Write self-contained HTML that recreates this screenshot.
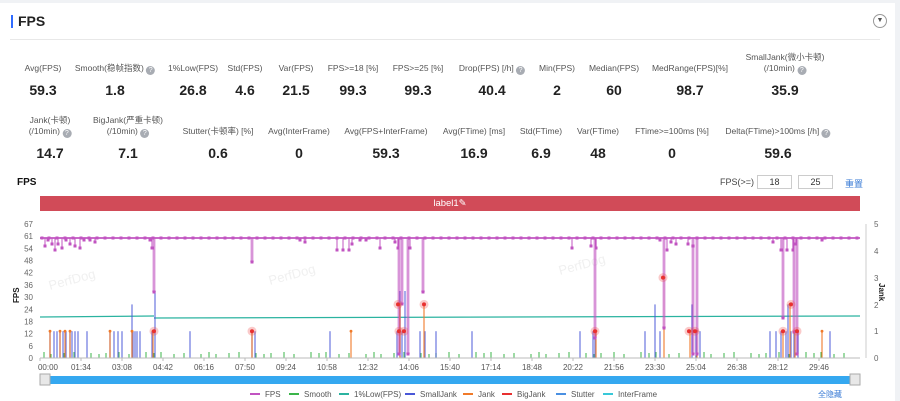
<!DOCTYPE html>
<html><head><meta charset="utf-8">
<style>
*{margin:0;padding:0;box-sizing:border-box}
body{width:900px;height:401px;background:#f0f2f5;font-family:"Liberation Sans","Noto Sans CJK SC",sans-serif;overflow:hidden;position:relative}
.card{position:absolute;left:0;top:3px;width:895px;height:398px;background:#fff}
.a{position:absolute;white-space:nowrap}
.l{font-size:8.5px;color:#555;text-align:center;transform:translateX(-50%);line-height:11px}
.v{font-size:14px;font-weight:bold;color:#222;transform:translateX(-50%)}
.q{display:inline-block;width:9px;height:9px;border-radius:50%;background:#a8acb3;color:#fff;font-size:7px;line-height:9px;text-align:center;vertical-align:-1px}
.inp{position:absolute;border:1px solid #ccc;height:14px;width:35px;font-size:9px;text-align:center;line-height:12px;color:#333}
</style></head><body>
<div class="card"></div>
<div class="a" style="left:11px;top:15px;width:2px;height:13px;background:#2f6bff"></div>
<div class="a" style="left:18px;top:13px;font-size:14px;font-weight:bold;color:#222">FPS</div>
<div class="a" style="left:10px;top:39px;width:870px;height:1px;background:#e8e8e8"></div>
<div class="a" style="left:873px;top:14px;width:14px;height:14px;border:1px solid #999;border-radius:50%;font-size:7px;text-align:center;line-height:12px;color:#555">▼</div>

<div class="a l" style="left:43px;top:63px">Avg(FPS)</div><div class="a v" style="left:43px;top:82px">59.3</div>
<div class="a l" style="left:115px;top:63px">Smooth(稳帧指数) <span class="q">?</span></div><div class="a v" style="left:115px;top:82px">1.8</div>
<div class="a l" style="left:193px;top:63px">1%Low(FPS)</div><div class="a v" style="left:193px;top:82px">26.8</div>
<div class="a l" style="left:245px;top:63px">Std(FPS)</div><div class="a v" style="left:245px;top:82px">4.6</div>
<div class="a l" style="left:296px;top:63px">Var(FPS)</div><div class="a v" style="left:296px;top:82px">21.5</div>
<div class="a l" style="left:353px;top:63px">FPS&gt;=18 [%]</div><div class="a v" style="left:353px;top:82px">99.3</div>
<div class="a l" style="left:418px;top:63px">FPS&gt;=25 [%]</div><div class="a v" style="left:418px;top:82px">99.3</div>
<div class="a l" style="left:492px;top:63px">Drop(FPS) [/h] <span class="q">?</span></div><div class="a v" style="left:492px;top:82px">40.4</div>
<div class="a l" style="left:557px;top:63px">Min(FPS)</div><div class="a v" style="left:557px;top:82px">2</div>
<div class="a l" style="left:614px;top:63px">Median(FPS)</div><div class="a v" style="left:614px;top:82px">60</div>
<div class="a l" style="left:690px;top:63px">MedRange(FPS)[%]</div><div class="a v" style="left:690px;top:82px">98.7</div>
<div class="a l" style="left:785px;top:52px">SmallJank(微小卡顿)<br>(/10min) <span class="q">?</span></div><div class="a v" style="left:785px;top:82px">35.9</div>

<div class="a l" style="left:50px;top:115px">Jank(卡顿)<br>(/10min) <span class="q">?</span></div><div class="a v" style="left:50px;top:145px">14.7</div>
<div class="a l" style="left:128px;top:115px">BigJank(严重卡顿)<br>(/10min) <span class="q">?</span></div><div class="a v" style="left:128px;top:145px">7.1</div>
<div class="a l" style="left:218px;top:126px">Stutter(卡顿率) [%]</div><div class="a v" style="left:218px;top:145px">0.6</div>
<div class="a l" style="left:299px;top:126px">Avg(InterFrame)</div><div class="a v" style="left:299px;top:145px">0</div>
<div class="a l" style="left:386px;top:126px">Avg(FPS+InterFrame)</div><div class="a v" style="left:386px;top:145px">59.3</div>
<div class="a l" style="left:474px;top:126px">Avg(FTime) [ms]</div><div class="a v" style="left:474px;top:145px">16.9</div>
<div class="a l" style="left:541px;top:126px">Std(FTime)</div><div class="a v" style="left:541px;top:145px">6.9</div>
<div class="a l" style="left:598px;top:126px">Var(FTime)</div><div class="a v" style="left:598px;top:145px">48</div>
<div class="a l" style="left:672px;top:126px">FTime&gt;=100ms [%]</div><div class="a v" style="left:672px;top:145px">0</div>
<div class="a l" style="left:778px;top:126px">Delta(FTime)&gt;100ms [/h] <span class="q">?</span></div><div class="a v" style="left:778px;top:145px">59.6</div>

<div class="a" style="left:17px;top:177px;font-size:10px;font-weight:bold;color:#111">FPS</div>
<div class="a" style="left:720px;top:177px;font-size:9px;color:#444">FPS(&gt;=)</div>
<div class="inp" style="left:757px;top:175px">18</div>
<div class="inp" style="left:798px;top:175px">25</div>
<div class="a" style="left:845px;top:177px;font-size:9px;color:#3a7bd5">重置</div>
<div class="a" style="left:40px;top:196px;width:820px;height:15px;background:#d14b58;color:#fff;font-size:9.5px;text-align:center;line-height:15px">label1✎</div>

<svg class="a" style="left:0;top:0" width="900" height="401" id="s">
<g font-size="8" fill="#666" text-anchor="end" font-family="Liberation Sans" id="yl"></g>
<g font-size="8" fill="#666" font-family="Liberation Sans">
<text x="874" y="227">5</text><text x="874" y="254">4</text><text x="874" y="281">3</text><text x="874" y="308">2</text><text x="874" y="334">1</text><text x="874" y="361">0</text>
</g>
<line x1="866" y1="224" x2="866" y2="358" stroke="#ccc"/>
<text x="0" y="0" font-size="8" font-weight="bold" fill="#222" transform="translate(19,303) rotate(-90)">FPS</text>
<text x="0" y="0" font-size="8" font-weight="bold" fill="#222" transform="translate(879,283) rotate(90)">Jank</text>
<text x="560" y="275" font-size="13" fill="#f0f0f0" transform="rotate(-15 560 275)">PerfDog</text>
<text x="270" y="285" font-size="13" fill="#f0f0f0" transform="rotate(-15 270 285)">PerfDog</text>
<text x="50" y="290" font-size="13" fill="#f0f0f0" transform="rotate(-15 50 290)">PerfDog</text>
<g id="d"></g>
<line x1="40" y1="358" x2="860" y2="358" stroke="#bbb"/>
<g font-size="8" fill="#555" text-anchor="middle" font-family="Liberation Sans" id="xl"></g>
<rect x="40" y="376" width="820" height="8" fill="#35a8f0"/>
<rect x="40" y="374" width="10" height="11" fill="#e8e8e8" stroke="#aaa"/>
<rect x="850" y="374" width="10" height="11" fill="#e8e8e8" stroke="#aaa"/>
<g font-size="8" fill="#555" font-family="Liberation Sans" id="lg"></g>
<text x="818" y="397" font-size="8" fill="#3a7bd5">全隐藏</text>
</svg>
<script>
var d=document.getElementById('d'),h='';
function L(x1,y1,x2,y2,c,w,o){h+='<line x1="'+x1+'" y1="'+y1+'" x2="'+x2+'" y2="'+y2+'" stroke="'+c+'" stroke-width="'+(w||1)+'" '+(o?'opacity="'+o+'"':'')+'/>';}
function Y(f){return 358-f*2;}function J(j){return 358-j*26.8;}
var yl='';[67,61,54,48,42,36,30,24,18,12,6,0].forEach(function(v,i){yl+='<text x="33" y="'+(227+i*12.18).toFixed(1)+'">'+v+'</text>';});
document.getElementById('yl').innerHTML=yl;
for(var x=44;x<858;x+=7+((x*37)%11)){L(x,358,x,354-((x*13)%3),'#3bb54a',1);}
L(40,317,154,316,'#2bb3a0',1.2);L(154,318,860,316,'#2bb3a0',1.2);
var sj=[50,54,57,60,63,66,70,72,75,78,87,110,114,118,122,132,133,135,137,140,152,155,190,252,255,330,397,400,402,405,420,425,436,472,580,593,595,645,655,660,692,696,700,770,776,781,786,788,791,794,798,830];
sj.forEach(function(x,i){var hgt=1;if(x==132)hgt=2;if(x==400||x==405||x==155)hgt=2.5;if(x==655||x==692||x==783||x==788)hgt=2;L(x,358,x,J(hgt),'#4a58d8',1.3,0.75);});
[50,60,65,70,110,132,153,252,351,400,424,596,664,690,697,783,790,795,822].forEach(function(x){var j=1;if(x==664)j=3;if(x==790||x==424||x==400)j=2;L(x,358,x,J(j),'#f07a2a',1.1);h+='<circle cx="'+x+'" cy="'+J(j)+'" r="1.4" fill="#f07a2a"/>';});
var dips={154:33,252:48,399:2,402:27,408:2,423:33,595:10,664:15,693:2,697:2,783:20,794:13,797:2};
for(var q in dips){L(q,Y(60),q,Y(dips[q]),'#c154c1',4,0.25);L(q,Y(60),q,Y(dips[q]),'#c154c1',1);h+='<rect x="'+(q-1.5)+'" y="'+(Y(dips[q])-1.5)+'" width="3" height="3" fill="#c154c1"/>';}
L(40,238,860,238,'#c154c1',1.8);
for(var x=42;x<860;x+=5+((x*7)%4)){h+='<rect x="'+(x-1.5)+'" y="236.5" width="3" height="3" fill="#c154c1"/>';}
[45,48,52,55,58,62,66,70,75,80,84,90,95,150,152,300,305,337,343,349,352,360,366,380,395,398,410,572,591,596,660,667,671,676,688,693,773,781,787,793,796,822].forEach(function(x,i){var f=60-(1+((x*17)%6));L(x,238,x,Y(f),'#c154c1',1);h+='<rect x="'+(x-1.5)+'" y="'+(Y(f)-1.5)+'" width="3" height="3" fill="#c154c1"/>';});
[[154,1],[252,1],[398,2],[399,1],[404,1],[424,2],[595,1],[663,3],[689,1],[695,1],[783,1],[791,2],[797,1]].forEach(function(c){h+='<circle cx="'+c[0]+'" cy="'+J(c[1])+'" r="4.5" fill="#f05050" opacity="0.3"/><circle cx="'+c[0]+'" cy="'+J(c[1])+'" r="2" fill="#e83030"/>';});
d.innerHTML=h;
var xl='',lb=['00:00','01:34','03:08','04:42','06:16','07:50','09:24','10:58','12:32','14:06','15:40','17:14','18:48','20:22','21:56','23:30','25:04','26:38','28:12','29:46'];
lb.forEach(function(t,i){var x=40+41*i;xl+='<line x1="'+x+'" y1="358" x2="'+x+'" y2="361" stroke="#bbb"/><text x="'+(i==0?48:x)+'" y="370">'+t+'</text>';});
document.getElementById('xl').innerHTML=xl;
var lg='',it=[['FPS','#c154c1',250],['Smooth','#3bb54a',289],['1%Low(FPS)','#2bb3a0',339],['SmallJank','#4a58d8',405],['Jank','#f07a2a',463],['BigJank','#e83030',502],['Stutter','#4a90e2',556],['InterFrame','#38c8d8',603]];
it.forEach(function(a){lg+='<rect x="'+a[2]+'" y="393" width="10" height="2" fill="'+a[1]+'"/><text x="'+(a[2]+15)+'" y="397">'+a[0]+'</text>';});
document.getElementById('lg').innerHTML=lg;
</script>
</body></html>
